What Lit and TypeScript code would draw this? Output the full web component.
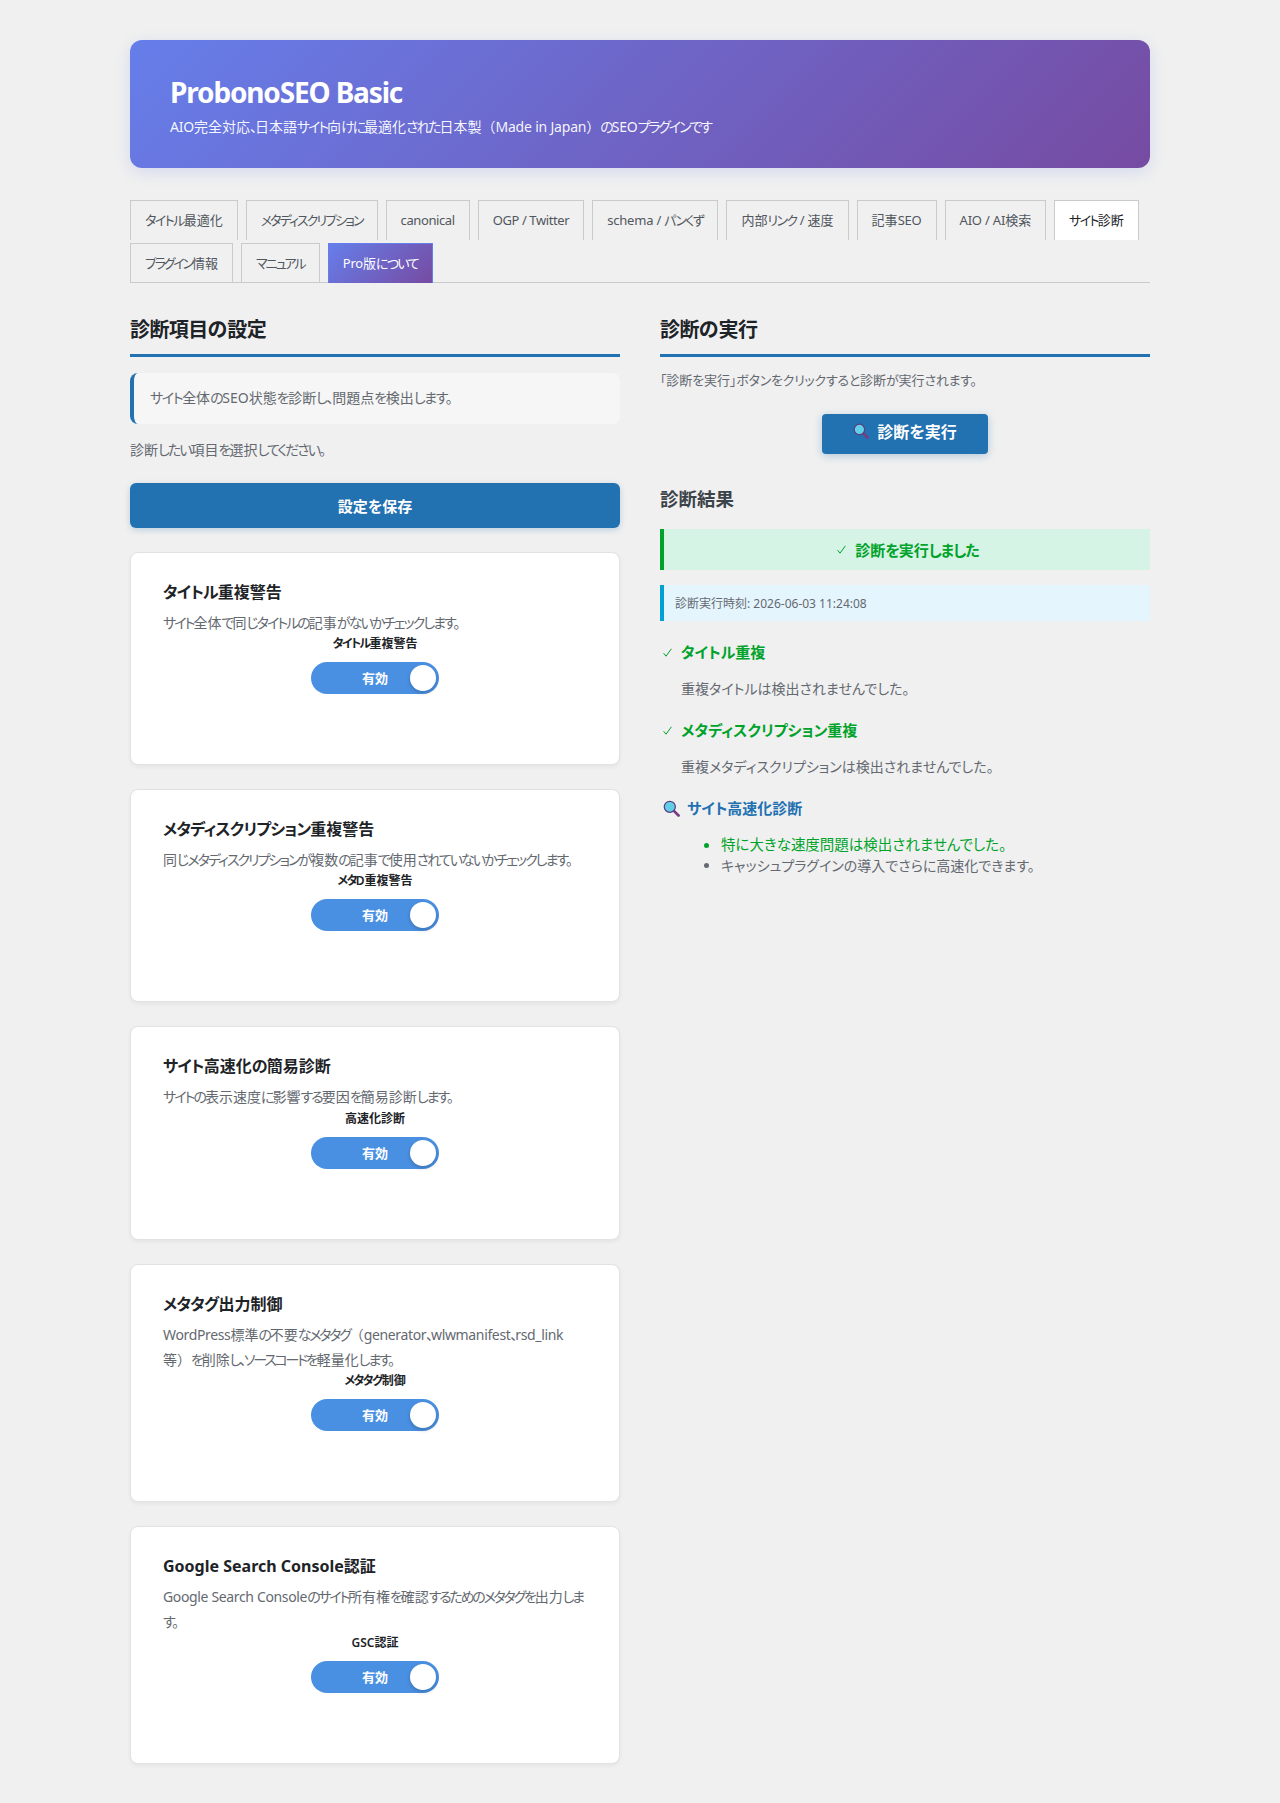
import { LitElement, html, css, svg } from "lit";
import { customElement } from "lit/decorators.js";

const lens = svg`<svg class="lens" viewBox="0 0 16 16" aria-hidden="true">
  <line x1="10" y1="10" x2="14.6" y2="14.6" stroke="#7a3b86" stroke-width="2.6" stroke-linecap="round"></line>
  <circle cx="6.4" cy="6.4" r="5.2" fill="#62cfe9" stroke="#5a3f7e" stroke-width="1.2"></circle>
</svg>`;

const check = svg`<svg class="check" viewBox="0 0 9 9" aria-hidden="true">
  <polyline points="0.6,5.2 3,8.2 8.4,0.8" fill="none" stroke="#00a32a" stroke-width="1"></polyline>
</svg>`;

/* Splits a string into script runs so each run can take its own tracking; "|" only separates runs. */
const runs = (s: string) =>
  s.split("|").flatMap((part) =>
    (part.match(/[（）]|[A-Za-z0-9 _\/:.\-]+|[\u3000-\u30ff]+|[^（）A-Za-z0-9 _\/:.\-\u3000-\u30ff]+/g) ?? []).map((p) => {
      if (p === "（" || p === "）") return html`<span class="fw">${p}</span>`;
      if (/^[A-Za-z0-9 _\/:.\-]+$/.test(p)) return html`<span class="lat">${p}</span>`;
      if (/^[\u3000-\u30ff]+$/.test(p)) return html`<span class="kana">${p}</span>`;
      return html`<span class="kan">${p}</span>`;
    })
  );

const tabs = [
  { t: "タイトル最適化" }, { t: "メタディスクリプション", c: "mid" }, { t: "canonical", c: "latin" }, { t: "OGP / Twitter", c: "latin" },
  { t: "schema / パンくず" }, { t: "内部リンク / 速度" }, { t: "記事SEO" }, { t: "AIO / AI検索" },
  { t: "サイト診断", c: "active" }, { t: "プラグイン情報", c: "tight" }, { t: "マニュアル", c: "mid" }, { t: "Pro版について", c: "pro" },
];

const cards = [
  { h: "タイトル重複警告", d: "サイト全体で同じタイトルの記事がないかチェックします。", l: "タイトル重複警告" },
  { h: "メタディスクリプション重複警告", d: "同じメタディスクリプションが複数の記事で使用されていないかチェックします。", l: "メタD重複警告" },
  { h: "サイト高速化の簡易診断", d: "サイトの表示速度に影響する要因を簡易診断します。", l: "高速化診断" },
  { h: "メタタグ出力制御", d: "WordPress標準の不要なメタタグ（generator、wlwmanifest、rsd_link等）を削除し、ソースコードを軽量化します。", l: "メタタグ制御", c: "tight" },
  { h: "Google Search Console認証", d: "Google Search Consoleのサイト所有権を確認するためのメタタグを出力しま|す。", l: "GSC認証", c: "tight" },
];

@customElement("app-root")
export class AppRoot extends LitElement {
  static styles = css`
    :host {
      display: block;
      background: #f0f0f0;
      font-family: "Noto Sans", "Noto Sans CJK JP", sans-serif;
      font-feature-settings: "palt";
      color: #646970;
      font-size: 14px;
    }
    * { box-sizing: border-box; }
    .lat { letter-spacing: var(--lat, 0); }
    .kana { letter-spacing: var(--kana, -0.12em); }
    .kan { letter-spacing: var(--kan, 0); }
    .fw { font-feature-settings: normal; }
    .wrap { padding: 40px 130px 41px; }
    .hero {
      height: 128px;
      padding: 33px 40px 0;
      border-radius: 12px;
      color: #fff;
      background: linear-gradient(135deg, #667eea 0%, #764ba2 100%);
      box-shadow: 0 4px 15px rgba(102, 126, 234, 0.2);
    }
    .hero h1 { margin: 0; font-size: 28px; line-height: 38px; font-weight: 700; letter-spacing: -1.15px; }
    .hero p { margin: 6px 0 0; font-size: 14px; line-height: 20px; color: rgba(255,255,255,.95); --kana: -0.15em; --lat: -0.2px; }
    .tabs {
      display: flex;
      flex-wrap: wrap;
      gap: 3px 8px;
      margin-top: 32px;
      border-bottom: 1px solid #c9cacc;
      height: 83px;
      --kana: -0.12em;
      --lat: -0.2px;
    }
    .tab {
      height: 40px;
      padding: 0 14px;
      border: 1px solid #c9cacc;
      border-bottom: 0;
      font-size: 13px;
      line-height: 38px;
      color: #50575e;
      white-space: nowrap;
    }
    .tab.mid { --kana: -0.15em; }
    .tab.tight { --kana: -0.17em; }
    .tab.latin { --lat: -0.4px; }
    .tab.active { background: #fff; color: #1d2327; --kana: -0.13em; }
    .tab.pro {
      color: #fff;
      border-color: #667eea;
      background: linear-gradient(135deg, #667eea 0%, #764ba2 100%);
      --kana: -0.13em;
    }
    .cols { display: grid; grid-template-columns: 490px 490px; gap: 40px; margin-top: 26px; }
    h2 {
      margin: 0;
      height: 48px;
      font-size: 20px;
      line-height: 42px;
      font-weight: 700;
      color: #1d2327;
      border-bottom: 3px solid #2271b1;
      --kan: -0.03em;
      --kana: 0;
    }
    .intro {
      margin-top: 16px;
      height: 51px;
      padding: 14px 16px;
      line-height: 21px;
      font-size: 14px;
      background: #f6f6f6;
      border-left: 4px solid #2271b1;
      border-radius: 8px;
      --kana: -0.1em;
    }
    .hint { margin: 15px 0 0; line-height: 21px; font-size: 14px; --kana: -0.14em; }
    .save {
      display: block;
      width: 100%;
      height: 45px;
      margin-top: 23px;
      border: 0;
      border-radius: 6px;
      background: #2271b1;
      color: #fff;
      font: inherit;
      font-size: 15px;
      font-weight: 700;
      box-shadow: 0 2px 6px rgba(34, 113, 177, 0.25);
    }
    .card {
      margin-top: 24px;
      padding: 27px 32px 70px;
      background: #fff;
      border: 1px solid #e2e2e2;
      border-radius: 8px;
      box-shadow: 0 2px 4px rgba(0,0,0,.05);
    }
    .card h3 { margin: 0; font-size: 16px; line-height: 24px; font-weight: 700; color: #1d2327; --kana: -0.05em; }
    .card p { margin: 6px 0 0; font-size: 14px; line-height: 25.2px; color: #646970; --kana: -0.14em; }
    .card.tight p { --kana: -0.16em; --lat: -0.35px; }
    .card .lab { text-align: center; font-size: 12px; line-height: 18px; font-weight: 600; color: #1d2327; --kana: -0.14em; }
    .toggle {
      position: relative;
      width: 128px;
      height: 32px;
      margin: 9px auto 0;
      border-radius: 16px;
      background: #4a90e2;
      color: #fff;
      font-size: 13px;
      font-weight: 700;
      line-height: 33px;
      text-align: center;
    }
    .knob {
      position: absolute;
      right: 3px;
      top: 3px;
      width: 26px;
      height: 26px;
      border-radius: 50%;
      background: #fff;
      box-shadow: 0 2px 4px rgba(0,0,0,.2);
    }
    .lead { margin: 13px 0 0; font-size: 13px; line-height: 21px; --kana: -0.02em; }
    .run {
      display: flex;
      align-items: center;
      justify-content: center;
      gap: 8px;
      width: 166px;
      height: 40px;
      margin: 23px auto 0;
      padding: 0 0 6px;
      border: 0;
      border-radius: 4px;
      background: #2271b1;
      color: #fff;
      font: inherit;
      font-size: 16px;
      font-weight: 700;
      box-shadow: 0 2px 8px rgba(34, 113, 177, 0.3);
    }
    .run .lens { width: 16px; height: 16px; }
    .results { --kana: 0; }
    .rh { margin: 32px 0 0; font-size: 18.5px; line-height: 26px; font-weight: 600; color: #3c434a; }
    .ok {
      display: flex;
      align-items: center;
      justify-content: center;
      gap: 9px;
      margin-top: 17px;
      height: 41px;
      padding-left: 2px;
      border-left: 4px solid #00a32a;
      background: #d5f4e5;
      color: #00a32a;
      font-size: 15px;
      font-weight: 700;
      --kana: -0.07em;
    }
    .check { width: 9px; height: 9px; flex: none; }
    .time {
      margin-top: 15px;
      height: 36px;
      padding-left: 11px;
      border-left: 4px solid #00a0d2;
      background: #e5f5fd;
      font-size: 12px;
      line-height: 37px;
      color: #646970;
    }
    .rt { margin: 19.5px 0 0; display: flex; align-items: center; gap: 9px; padding-left: 3px; font-size: 15px; line-height: 24px; font-weight: 700; color: #00a32a; }
    .rt.first { margin-top: 19px; }
    .rt.blue { color: #2271b1; gap: 7px; }
    .rt .lens { width: 17px; height: 17px; }
    .rb { margin: 13.5px 0 0 21px; font-size: 14px; line-height: 21px; }
    ul { margin: 13.5px 0 0; padding-left: 61px; font-size: 14px; line-height: 21px; }
    li.good { color: #00a32a; font-size: 14.5px; }
  `;

  render() {
    return html`<div class="wrap">
      <header class="hero">
        <h1>ProbonoSEO Basic</h1>
        <p>${runs("AIO完全対応、日本語サイト向けに最適化された日本製（Made in Japan）のSEOプラグインです")}</p>
      </header>
      <nav class="tabs">
        ${tabs.map((x) => html`<div class="tab ${x.c ?? ""}">${runs(x.t)}</div>`)}
      </nav>
      <div class="cols">
        <section>
          <h2>${runs("診断項目の設定")}</h2>
          <div class="intro">${runs("サイト全体のSEO状態を診断し、問題点を検出します。")}</div>
          <p class="hint">${runs("診断したい項目を選択してください。")}</p>
          <button class="save">設定を保存</button>
          ${cards.map((c) => html`<div class="card ${c.c ?? ""}">
            <h3>${runs(c.h)}</h3>
            <p>${runs(c.d)}</p>
            <div class="lab">${runs(c.l)}</div>
            <div class="toggle">有効<span class="knob"></span></div>
          </div>`)}
        </section>
        <section>
          <h2>${runs("診断の実行")}</h2>
          <p class="lead">${runs("「診断を実行」ボタンをクリックすると診断が実行されます。")}</p>
          <button class="run">${lens}<span>診断を実行</span></button>
          <div class="results">
            <h3 class="rh">診断結果</h3>
            <div class="ok">${check}<span>${runs("診断を実行しました")}</span></div>
            <div class="time">診断実行時刻: 2026-06-03 11:24:08</div>
            <h4 class="rt first">${check}タイトル重複</h4>
            <p class="rb">重複タイトルは検出されませんでした。</p>
            <h4 class="rt">${check}メタディスクリプション重複</h4>
            <p class="rb">重複メタディスクリプションは検出されませんでした。</p>
            <h4 class="rt blue">${lens}サイト高速化診断</h4>
            <ul>
              <li class="good">特に大きな速度問題は検出されませんでした。</li>
              <li>キャッシュプラグインの導入でさらに高速化できます。</li>
            </ul>
          </div>
        </section>
      </div>
    </div>`;
  }
}
